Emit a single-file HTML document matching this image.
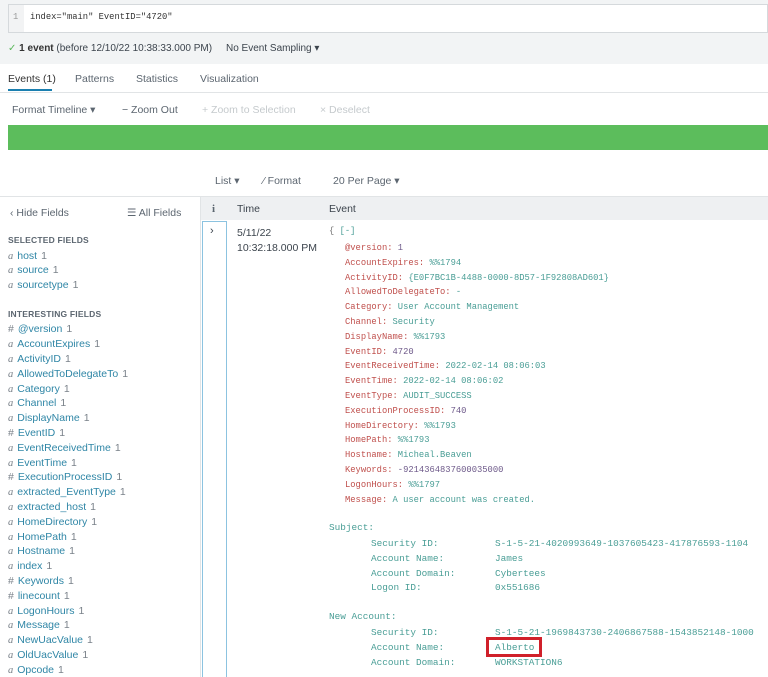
<!DOCTYPE html>
<html><head><style>
*{margin:0;padding:0;box-sizing:border-box}
body{width:768px;height:677px;overflow:hidden;background:#fff;font-family:"Liberation Sans",sans-serif;font-size:11px;color:#3c444d;position:relative}
.a{position:absolute;white-space:nowrap}
.m{font-family:"Liberation Mono",monospace;font-size:8.8px}
.k{color:#c0504d}.v{color:#4a9e96}.n{color:#6e5a8a}
.f{color:#2f86a6;font-size:10.5px}
.f i{color:#7a828a;font-style:italic;font-family:"Liberation Serif",serif;margin-right:4px}
.f b{font-weight:normal;color:#7a828a;margin-right:4px}
.f s{text-decoration:none;color:#7a828a;margin-left:4px}
.h{font-size:8.5px;font-weight:bold;color:#5c6670;letter-spacing:.2px}
</style></head><body>
<div class="a" style="left:0;top:0;width:768px;height:64px;background:#f2f4f5"></div>
<div class="a" style="left:8px;top:4px;width:760px;height:29px;background:#fff;border:1px solid #d5d9dc"></div>
<div class="a" style="left:9px;top:5px;width:15px;height:27px;background:#f2f3f4"></div>
<div class="a m" style="left:13px;top:12px;color:#999">1</div>
<div class="a m" style="left:30px;top:12px;color:#333">index="main" EventID="4720"</div>
<div class="a" style="left:8px;top:43px;font-size:10px"><span style="color:#5cb85c">✓</span> <b style="color:#333">1 event</b> (before 12/10/22 10:38:33.000 PM)</div>
<div class="a" style="left:226px;top:43px;font-size:10px">No Event Sampling ▾</div>
<div class="a" style="left:0;top:92px;width:768px;height:1px;background:#e1e4e6"></div>
<div class="a" style="left:8px;top:73px;font-size:10.5px;color:#333">Events (1)</div>
<div class="a" style="left:8px;top:89px;width:44px;height:2px;background:#1a7fb0"></div>
<div class="a" style="left:75px;top:73px;font-size:10.5px;color:#5c6670">Patterns</div>
<div class="a" style="left:136px;top:73px;font-size:10.5px;color:#5c6670">Statistics</div>
<div class="a" style="left:200px;top:73px;font-size:10.5px;color:#5c6670">Visualization</div>
<div class="a" style="left:12px;top:104px;font-size:10.5px;color:#5c6670">Format Timeline ▾</div>
<div class="a" style="left:122px;top:104px;font-size:10.5px;color:#5c6670">− Zoom Out</div>
<div class="a" style="left:202px;top:104px;font-size:10.5px;color:#c5cacd">+ Zoom to Selection</div>
<div class="a" style="left:320px;top:104px;font-size:10.5px;color:#c5cacd">× Deselect</div>
<div class="a" style="left:8px;top:125px;width:760px;height:25px;background:#5cbd5c"></div>
<div class="a" style="left:215px;top:175px;font-size:10.5px;color:#5c6670">List ▾</div>
<div class="a" style="left:263px;top:175px;font-size:10.5px;color:#5c6670">⁄ Format</div>
<div class="a" style="left:333px;top:175px;font-size:10.5px;color:#5c6670">20 Per Page ▾</div>
<div class="a" style="left:0;top:196px;width:768px;height:1px;background:#e1e4e6"></div>
<div class="a" style="left:201px;top:197px;width:567px;height:23px;background:#eef0f2"></div>
<div class="a" style="left:200px;top:197px;width:1px;height:480px;background:#e1e4e6"></div>
<div class="a" style="left:212px;top:203px;font-weight:bold;color:#5c6670;font-family:'Liberation Serif',serif">i</div>
<div class="a" style="left:237px;top:203px;font-size:10.5px">Time</div>
<div class="a" style="left:329px;top:203px;font-size:10.5px">Event</div>
<div class="a" style="left:202px;top:221px;width:25px;height:456px;border:1px solid #8cc3e0;border-bottom:none"></div>
<div class="a" style="left:210px;top:225px;font-size:11px">›</div>
<div class="a" style="left:237px;top:227px;font-size:10.5px">5/11/22</div>
<div class="a" style="left:237px;top:242px;font-size:10.5px">10:32:18.000 PM</div>
<div class="a" style="left:10px;top:207px;font-size:10.5px;color:#5c6670">‹ Hide Fields</div>
<div class="a" style="left:127px;top:207px;font-size:10.5px;color:#5c6670">☰ All Fields</div>
<div class="a h" style="left:8px;top:235px">SELECTED FIELDS</div>
<div class="a f" style="left:8px;top:250px"><i>a</i>host<s>1</s></div>
<div class="a f" style="left:8px;top:264px"><i>a</i>source<s>1</s></div>
<div class="a f" style="left:8px;top:279px"><i>a</i>sourcetype<s>1</s></div>
<div class="a h" style="left:8px;top:309px">INTERESTING FIELDS</div>
<div class="a f" style="left:8px;top:323px"><b>#</b>@version<s>1</s></div>
<div class="a f" style="left:8px;top:338px"><i>a</i>AccountExpires<s>1</s></div>
<div class="a f" style="left:8px;top:353px"><i>a</i>ActivityID<s>1</s></div>
<div class="a f" style="left:8px;top:368px"><i>a</i>AllowedToDelegateTo<s>1</s></div>
<div class="a f" style="left:8px;top:383px"><i>a</i>Category<s>1</s></div>
<div class="a f" style="left:8px;top:397px"><i>a</i>Channel<s>1</s></div>
<div class="a f" style="left:8px;top:412px"><i>a</i>DisplayName<s>1</s></div>
<div class="a f" style="left:8px;top:427px"><b>#</b>EventID<s>1</s></div>
<div class="a f" style="left:8px;top:442px"><i>a</i>EventReceivedTime<s>1</s></div>
<div class="a f" style="left:8px;top:457px"><i>a</i>EventTime<s>1</s></div>
<div class="a f" style="left:8px;top:471px"><b>#</b>ExecutionProcessID<s>1</s></div>
<div class="a f" style="left:8px;top:486px"><i>a</i>extracted_EventType<s>1</s></div>
<div class="a f" style="left:8px;top:501px"><i>a</i>extracted_host<s>1</s></div>
<div class="a f" style="left:8px;top:516px"><i>a</i>HomeDirectory<s>1</s></div>
<div class="a f" style="left:8px;top:531px"><i>a</i>HomePath<s>1</s></div>
<div class="a f" style="left:8px;top:545px"><i>a</i>Hostname<s>1</s></div>
<div class="a f" style="left:8px;top:560px"><i>a</i>index<s>1</s></div>
<div class="a f" style="left:8px;top:575px"><b>#</b>Keywords<s>1</s></div>
<div class="a f" style="left:8px;top:590px"><b>#</b>linecount<s>1</s></div>
<div class="a f" style="left:8px;top:605px"><i>a</i>LogonHours<s>1</s></div>
<div class="a f" style="left:8px;top:619px"><i>a</i>Message<s>1</s></div>
<div class="a f" style="left:8px;top:634px"><i>a</i>NewUacValue<s>1</s></div>
<div class="a f" style="left:8px;top:649px"><i>a</i>OldUacValue<s>1</s></div>
<div class="a f" style="left:8px;top:664px"><i>a</i>Opcode<s>1</s></div>
<div class="a m" style="left:329px;top:226px;color:#777">{ <span class="v">[-]</span></div>
<div class="a m" style="left:345px;top:241px;line-height:14.8px">
<span class="k">@version:</span> <span class="n">1</span><br>
<span class="k">AccountExpires:</span> <span class="v">%%1794</span><br>
<span class="k">ActivityID:</span> <span class="v">{E0F7BC1B-4488-0000-8D57-1F92808AD601}</span><br>
<span class="k">AllowedToDelegateTo:</span> <span class="v">-</span><br>
<span class="k">Category:</span> <span class="v">User Account Management</span><br>
<span class="k">Channel:</span> <span class="v">Security</span><br>
<span class="k">DisplayName:</span> <span class="v">%%1793</span><br>
<span class="k">EventID:</span> <span class="n">4720</span><br>
<span class="k">EventReceivedTime:</span> <span class="v">2022-02-14 08:06:03</span><br>
<span class="k">EventTime:</span> <span class="v">2022-02-14 08:06:02</span><br>
<span class="k">EventType:</span> <span class="v">AUDIT_SUCCESS</span><br>
<span class="k">ExecutionProcessID:</span> <span class="n">740</span><br>
<span class="k">HomeDirectory:</span> <span class="v">%%1793</span><br>
<span class="k">HomePath:</span> <span class="v">%%1793</span><br>
<span class="k">Hostname:</span> <span class="v">Micheal.Beaven</span><br>
<span class="k">Keywords:</span> <span class="n">-9214364837600035000</span><br>
<span class="k">LogonHours:</span> <span class="v">%%1797</span><br>
<span class="k">Message:</span> <span class="v">A user account was created.</span></div>
<div class="a m v" style="left:329px;top:522px;font-size:9.4px">Subject:</div>
<div class="a m v" style="left:371px;top:537px;line-height:14.8px;font-size:9.4px">Security ID:<br>Account Name:<br>Account Domain:<br>Logon ID:</div>
<div class="a m v" style="left:495px;top:537px;line-height:14.8px;font-size:9.4px">S-1-5-21-4020993649-1037605423-417876593-1104<br>James<br>Cybertees<br>0x551686</div>
<div class="a m v" style="left:329px;top:611px;font-size:9.4px">New Account:</div>
<div class="a m v" style="left:371px;top:626px;line-height:14.8px;font-size:9.4px">Security ID:<br>Account Name:<br>Account Domain:</div>
<div class="a m v" style="left:495px;top:626px;line-height:14.8px;font-size:9.4px">S-1-5-21-1969843730-2406867588-1543852148-1000<br>Alberto<br>WORKSTATION6</div>
<div class="a" style="left:486px;top:637px;width:56px;height:20px;border:3px solid #d0202a"></div>
</body></html>
